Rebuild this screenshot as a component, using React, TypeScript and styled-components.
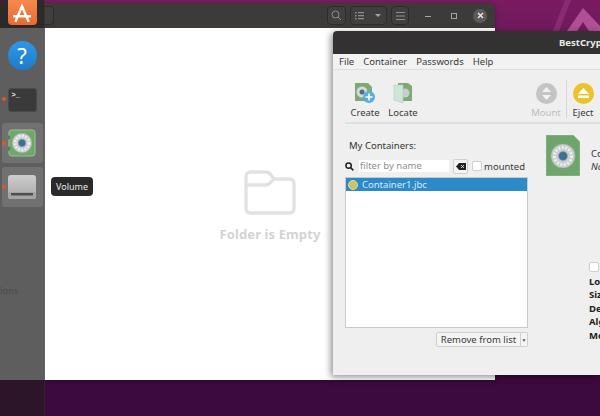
import React from "react";
import styled, { createGlobalStyle } from "styled-components";

const Global = createGlobalStyle`
  html, body { margin: 0; padding: 0; width: 600px; height: 416px; overflow: hidden; background: #300a3c; }
  * { box-sizing: border-box; }
  #root { width: 600px; height: 416px; }
`;
const Desktop = styled.div`
  position: relative; width: 600px; height: 416px; overflow: hidden;
  font-family: "Noto Sans", "Open Sans", sans-serif; color: #333;
  background: linear-gradient(180deg, #7a1a62 0px, #701a5c 30px, #3d0a3f 376px, #3d0a3f 416px);
`;
const Wallpaper = styled.svg`position: absolute; left: 495px; top: 0; width: 105px; height: 31px;`;
const Files = styled.div`
  position: absolute; left: 0; top: 3px; width: 495px; height: 377px;
  display: flex; flex-direction: column; border-radius: 6px 6px 0 0; overflow: hidden;
  box-shadow: 0 1px 4px rgba(0,0,0,.3);
`;
const Header = styled.div`
  height: 25px; background: #3c3b39; display: flex; align-items: center; padding-right: 8px; flex: none;
`;
const GhostBtn = styled.div`
  width: 18px; height: 19px; margin-left: 36px; margin-right: auto; border: 1px solid #2d2c2b; border-radius: 4px; background: #403f3d;
`;
const BtnGroup = styled.div`display: flex; gap: 4px;`;
const HBtn = styled.div<{ $w: number }>`
  width: ${p => p.$w}px; height: 19px; border: 1px solid #2d2c2b; border-radius: 4px; background: #403f3d;
  display: flex; align-items: center; justify-content: center;
`;
const WinGroup = styled.div`display: flex; gap: 12px; margin-left: 12px;`;
const WinCtl = styled.div<{ $close?: boolean }>`
  width: 14px; height: 14px; border-radius: 50%; background: ${p => p.$close ? "#5b5a58" : "transparent"};
  display: flex; align-items: center; justify-content: center;
`;
const FileBody = styled.div`
  flex: 1; background: #fff; display: flex; flex-direction: column; align-items: center; padding-top: 142px;
  margin-left: 45px; width: 450px;
`;
const EmptyText = styled.div`font-size: 13px; font-weight: 700; color: #d3d3d3; line-height: 18px; margin-top: 10px; letter-spacing: .1px;`;
const Dock = styled.div`
  position: absolute; left: 0; top: 0; width: 45px; height: 416px; display: flex; flex-direction: column; align-items: center;
  background: linear-gradient(180deg, rgba(40,38,38,.8) 0, rgba(40,38,38,.8) 28px, #5e5e5e 28px, #5e5e5e 380px, #2c1528 380px, #2c1528 416px);
  border-right: 1px solid rgba(255,255,255,.04);
`;
const DockSlot = styled.div<{ $active?: boolean; $nudge?: number }>`
  position: relative; width: 41px; height: 40px; border-radius: 3px; margin-bottom: 4px; padding-top: ${p => p.$nudge ?? 0}px;
  background: ${p => p.$active ? "rgba(255,255,255,.12)" : "transparent"};
  display: flex; align-items: center; justify-content: center; flex: none;
`;
const Dot = styled.span`
  position: absolute; left: 0px; top: 50%; margin-top: -2px; width: 4px; height: 4px; border-radius: 50%; background: #e95420;
`;
const Store = styled.div`
  width: 29px; height: 25px; background: linear-gradient(#f58a4f, #ea6a30); border-radius: 0 0 4px 4px;
  display: flex; justify-content: center; align-items: center; color: #fff; margin-bottom: 10px; flex: none;
`;
const Help = styled.div`
  width: 29px; height: 29px; border-radius: 50%; background: linear-gradient(#2f97e6, #1d7ccb);
  color: #fff; font-size: 22px; line-height: 29px; text-align: center;
`;
const Term = styled.div`
  width: 29px; height: 24px; border-radius: 3px; background: #3a3a3a; border: 1px solid #4a4a4a; color: #eee;
  font: 700 7px/9px "Liberation Mono", monospace; padding: 2px 3px;
`;
const DockLabel = styled.div`
  position: absolute; left: 0; top: 284px; width: 18px; overflow: hidden; direction: rtl;
  font-size: 9px; line-height: 14px; color: #4a4a4a;
`;
const Tip = styled.div`
  position: absolute; left: 51px; top: 177px; width: 42px; height: 19px; background: #2a2a2a; border-radius: 4px;
  color: #e8e8e8; font-size: 9px; line-height: 19px; text-align: center;
`;
const Crypt = styled.div`
  position: absolute; left: 333px; top: 31px; width: 267px; height: 344px; background: #efefef;
  border-radius: 4px 0 0 0; overflow: hidden; display: flex; flex-direction: column; font-size: 9.5px;
  box-shadow: -2px 2px 7px rgba(0,0,0,.45);
`;
const Title = styled.div`
  flex: none; height: 23px; background: #333131; color: #e9e9e9; font-weight: 700; font-size: 9.5px; line-height: 23px;
  padding-left: 226px; white-space: nowrap;
`;
const Menu = styled.div`
  flex: none; height: 16px; background: #f2f2f2; border-bottom: 1px solid #dedede; display: flex; gap: 9px; padding-left: 6px;
  line-height: 15px; white-space: nowrap; color: #3a3a3a;
`;
const Toolbar = styled.div`
  flex: none; height: 54px; margin-left: 12px; border-bottom: 2px solid #e0e0e0; display: flex;
  padding-top: 12px; padding-left: 1px;
`;
const Tool = styled.div<{ $dim?: boolean; $w: number }>`
  width: ${p => p.$w}px; flex: none; display: flex; flex-direction: column; align-items: center; gap: 2px;
  color: ${p => p.$dim ? "#bcbcbc" : "#3a3a3a"}; line-height: 13px; white-space: nowrap;
`;
const ToolSpacer = styled.div`width: 105px; flex: none;`;
const IconBox = styled.div`width: 24px; height: 22px; display: flex; align-items: center; justify-content: center;`;
const Round = styled.div<{ $c: string }>`
  width: 21px; height: 21px; border-radius: 50%; background: ${p => p.$c}; display: flex; align-items: center; justify-content: center;
`;
const ToolSep = styled.div`width: 1px; height: 38px; background: #d5d5d5; flex: none; margin: -2px 3px 0 1px;`;
const Main = styled.div`flex: 1; display: flex; min-height: 0;`;
const Left = styled.div`width: 195px; flex: none; padding: 15px 0 0 12px; display: flex; flex-direction: column;`;
const Heading = styled.div`font-size: 9.5px; line-height: 13px; padding-left: 4px; color: #333;`;
const FilterRow = styled.div`display: flex; align-items: center; height: 16px; margin-top: 6px;`;
const Filter = styled.div`
  width: 90px; height: 12px; margin-left: 5px; background: #fff; color: #8e8e8e; font-size: 9.5px; line-height: 12px; padding-left: 1px;
`;
const ClearBtn = styled.div`
  width: 15px; height: 15px; margin: 0 4px 0 4px; border: 1px solid #cfcfcf; border-radius: 2px; background: #f4f4f4;
  display: flex; align-items: center; justify-content: center;
`;
const Check = styled.div`width: 10px; height: 10px; border: 1px solid #cfcfcf; border-radius: 2px; background: #fff; flex: none;`;
const CheckLabel = styled.span`margin-left: 2px; color: #3a3a3a;`;
const List = styled.div`
  height: 151px; width: 183px; margin-top: 3px; background: #fff; border: 1px solid #c9c9c9; flex: none;
`;
const ListRow = styled.div`
  height: 13px; background: #2d8ac9; color: #d9ebf7; display: flex; align-items: center; padding-left: 2px; gap: 4px; line-height: 13px;
`;
const RowIcon = styled.div`width: 10px; height: 10px; border-radius: 50%; background: #cfc36a; border: 1px solid #e0d89a;`;
const RemoveRow = styled.div`display: flex; justify-content: flex-end; margin-top: 4px; width: 183px;`;
const Remove = styled.div`
  width: 85px; height: 15px; border: 1px solid #cfcfcf; border-radius: 2px 0 0 2px; background: #f4f4f4; text-align: center; line-height: 13px; color: #3a3a3a;
`;
const RemoveArrow = styled.div`
  width: 7px; height: 15px; border: 1px solid #cfcfcf; border-left: none; background: #f4f4f4; border-radius: 0 2px 2px 0;
  display: flex; align-items: center; justify-content: center; color: #555; font-size: 5px;
`;
const Right = styled.div`flex: 1; padding: 11px 0 0 18px; display: flex; flex-direction: column; overflow: hidden; white-space: nowrap;`;
const InfoHead = styled.div`display: flex; gap: 11px;`;
const BigIcon = styled.svg`flex: none;`;
const InfoText = styled.div`line-height: 13px; padding-top: 12px; color: #333;`;
const Italic = styled.div`font-style: italic;`;
const RightCheck = styled.div`margin: 86px 0 0 43px;`;
const Props = styled.div`margin: 3px 0 0 43px; font-weight: 700; color: #222; line-height: 13.4px;`;

const Folder = () => (
  <svg width="52" height="45" viewBox="0 0 52 45" fill="none" stroke="#e2e2e2" strokeWidth="3.4" strokeLinejoin="round">
    <path d="M2 7 q0 -5 5 -5 h15 q3 0 5 3 l3 4 h15 q5 0 5 5 v24 q0 5 -5 5 h-38 q-5 0 -5 -5 z" />
    <path d="M2 15 h19 q3 0 5 -2 l4 -4" />
  </svg>
);
const Safe = () => (
  <svg width="28" height="28" viewBox="0 0 30 30">
    <rect x="1" y="1" width="28" height="28" rx="3" fill="#6fa86a" stroke="#9cc696" />
    <rect x="0" y="7" width="2" height="4" fill="#4c7c4b" /><rect x="0" y="19" width="2" height="4" fill="#4c7c4b" />
    <circle cx="15" cy="15" r="10.5" fill="#c9cecd" stroke="#a4aeaa" strokeWidth=".6" />
    <circle cx="15" cy="15" r="7.5" fill="none" stroke="#eeeeee" strokeWidth="3" strokeDasharray="2 1.5" />
    <circle cx="15" cy="15" r="4" fill="#3d6f96" stroke="#8ea3ad" strokeWidth=".6" />
  </svg>
);
const Drive = () => (
  <svg width="28" height="24" viewBox="0 0 28 24">
    <defs><linearGradient id="dg" x1="0" y1="0" x2="0" y2="1"><stop offset="0" stopColor="#cdcdcd" /><stop offset="1" stopColor="#a9a9a9" /></linearGradient></defs>
    <rect width="28" height="24" rx="3" fill="url(#dg)" />
    <rect x="0" y="17" width="28" height="7" rx="2" fill="#a4a4a4" />
    <rect x="3" y="18" width="22" height="2.5" fill="#4f4f4f" />
  </svg>
);
const Create = () => (
  <svg width="22" height="22" viewBox="0 0 22 22">
    <path d="M1 1 h13 l4 4 v14 h-17z" fill="#7fa877" />
    <circle cx="8" cy="10" r="5.5" fill="#d6d9d8" /><circle cx="8" cy="10" r="2.5" fill="#4d6e85" />
    <circle cx="15" cy="15" r="6" fill="#5dace0" />
    <path d="M15 11.5 v7 M11.5 15 h7" stroke="#fff" strokeWidth="1.6" />
  </svg>
);
const Locate = () => (
  <svg width="20" height="22" viewBox="0 0 20 22">
    <path d="M5 1 h10 l4 3 v15 h-14z" fill="#7fa877" />
    <circle cx="12" cy="11" r="4.5" fill="#c8cfcc" />
    <path d="M1 3 l9 0 v18 l-9 -3z" fill="#cfe5dc" stroke="#a9cdbf" strokeWidth=".6" />
  </svg>
);

export default function App() {
  return (
    <Desktop>
      <Global />
      <Wallpaper viewBox="0 0 105 31">
        <path d="M58 31 L70 0 H76 L64 31z" fill="#8a2a72" />
        <path d="M72 31 L88 8 L105 26 V31 H94 L88 22 L82 31z" fill="#b04f96" />
      </Wallpaper>
      <Files>
        <Header>
          <GhostBtn />
          <BtnGroup>
            <HBtn $w={19}>
              <svg width="11" height="11" viewBox="0 0 11 11" fill="none" stroke="#8f8e8c" strokeWidth="1"><circle cx="4.5" cy="4.5" r="3.5" /><path d="M7 7 l3 3" /></svg>
            </HBtn>
            <HBtn $w={37}>
              <svg width="30" height="9" viewBox="0 0 30 9"><path d="M1 1h1.6v1.6h-1.6zM4 1h6v1.2h-6zM1 4h1.6v1.6h-1.6zM4 4h6v1.2h-6zM1 7h1.6v1.6h-1.6zM4 7h6v1.2h-6z" fill="#8f8e8c" /><path d="M21 3 h6 l-3 3z" fill="#a8a7a5" /></svg>
            </HBtn>
            <HBtn $w={18}>
              <svg width="9" height="8" viewBox="0 0 9 8" fill="#8f8e8c"><rect y="0" width="9" height="1" /><rect y="3.5" width="9" height="1" /><rect y="7" width="9" height="1" /></svg>
            </HBtn>
          </BtnGroup>
          <WinGroup>
            <WinCtl><svg width="6" height="2"><rect y="1" width="6" height="1" fill="#a5a4a2" /></svg></WinCtl>
            <WinCtl><svg width="6" height="6"><rect x=".5" y=".5" width="5" height="5" fill="none" stroke="#a5a4a2" /></svg></WinCtl>
            <WinCtl $close><svg width="7" height="7" viewBox="0 0 7 7"><path d="M1 1 L6 6 M6 1 L1 6" stroke="#eee" strokeWidth="1.4" /></svg></WinCtl>
          </WinGroup>
        </Header>
        <FileBody>
          <Folder />
          <EmptyText>Folder is Empty</EmptyText>
        </FileBody>
      </Files>
      <Dock>
        <Store>
          <svg width="20" height="20" viewBox="0 0 18 18" fill="none" stroke="#fff" strokeWidth="2.2"><path d="M3 17 L9 3 L15 17 M1 12 H17" /></svg>
        </Store>
        <DockSlot $nudge={1}><Help>?</Help></DockSlot>
        <DockSlot $nudge={2}><Dot /><Term>&gt;_</Term></DockSlot>
        <DockSlot $active><Dot /><Safe /></DockSlot>
        <DockSlot $active><Dot /><Drive /></DockSlot>
      </Dock>
      <DockLabel>ions</DockLabel>
      <Tip>Volume</Tip>
      <Crypt>
        <Title>BestCrypt</Title>
        <Menu><span>File</span><span>Container</span><span>Passwords</span><span>Help</span></Menu>
        <Toolbar>
          <Tool $w={38}><IconBox><Create /></IconBox>Create</Tool>
          <Tool $w={38}><IconBox><Locate /></IconBox>Locate</Tool>
          <ToolSpacer />
          <Tool $w={38} $dim>
            <IconBox><Round $c="#c4c4c4"><svg width="11" height="13" viewBox="0 0 11 13" fill="#f2f2f2"><path d="M5.5 0 L10 5 H1z M1 8 H10 L5.5 13z" /></svg></Round></IconBox>
            Mount
          </Tool>
          <ToolSep />
          <Tool $w={26}>
            <IconBox><Round $c="#eec22a"><svg width="11" height="10" viewBox="0 0 11 10" fill="#fff"><path d="M5.5 0 L11 6 H0z M0 7.5 H11 V10 H0z" /></svg></Round></IconBox>
            Eject
          </Tool>
        </Toolbar>
        <Main>
          <Left>
            <Heading>My Containers:</Heading>
            <FilterRow>
              <svg width="9" height="9" viewBox="0 0 9 9" fill="none" stroke="#222" strokeWidth="1.5"><circle cx="3.6" cy="3.6" r="2.7" /><path d="M5.6 5.6 L8.4 8.4" /></svg>
              <Filter>filter by name</Filter>
              <ClearBtn><svg width="10" height="7" viewBox="0 0 10 7"><path d="M3 0 H10 V7 H3 L0 3.5z" fill="#222" /><path d="M5 2 L8 5 M8 2 L5 5" stroke="#fff" strokeWidth=".8" /></svg></ClearBtn>
              <Check /><CheckLabel>mounted</CheckLabel>
            </FilterRow>
            <List>
              <ListRow><RowIcon />Container1.jbc</ListRow>
            </List>
            <RemoveRow><Remove>Remove from list</Remove><RemoveArrow>▼</RemoveArrow></RemoveRow>
          </Left>
          <Right>
            <InfoHead>
              <BigIcon width="34" height="41" viewBox="0 0 34 41">
                <path d="M0 0 H27 L34 7 V41 H0z" fill="#6fa56c" stroke="#8dbb88" />
                <circle cx="17" cy="21" r="12" fill="#c9cecd" stroke="#a4aeaa" strokeWidth=".6" />
                <circle cx="17" cy="21" r="8.5" fill="none" stroke="#eeeeee" strokeWidth="3" strokeDasharray="2 1.5" />
                <circle cx="17" cy="21" r="4.5" fill="#3f6f92" stroke="#8ea3ad" strokeWidth=".6" />
              </BigIcon>
              <InfoText>Container<Italic>Not mounted</Italic></InfoText>
            </InfoHead>
            <RightCheck><Check /></RightCheck>
            <Props>
              <div>Location:</div><div>Size:</div><div>Description:</div><div>Algorithm:</div><div>Mode:</div>
            </Props>
          </Right>
        </Main>
      </Crypt>
    </Desktop>
  );
}
